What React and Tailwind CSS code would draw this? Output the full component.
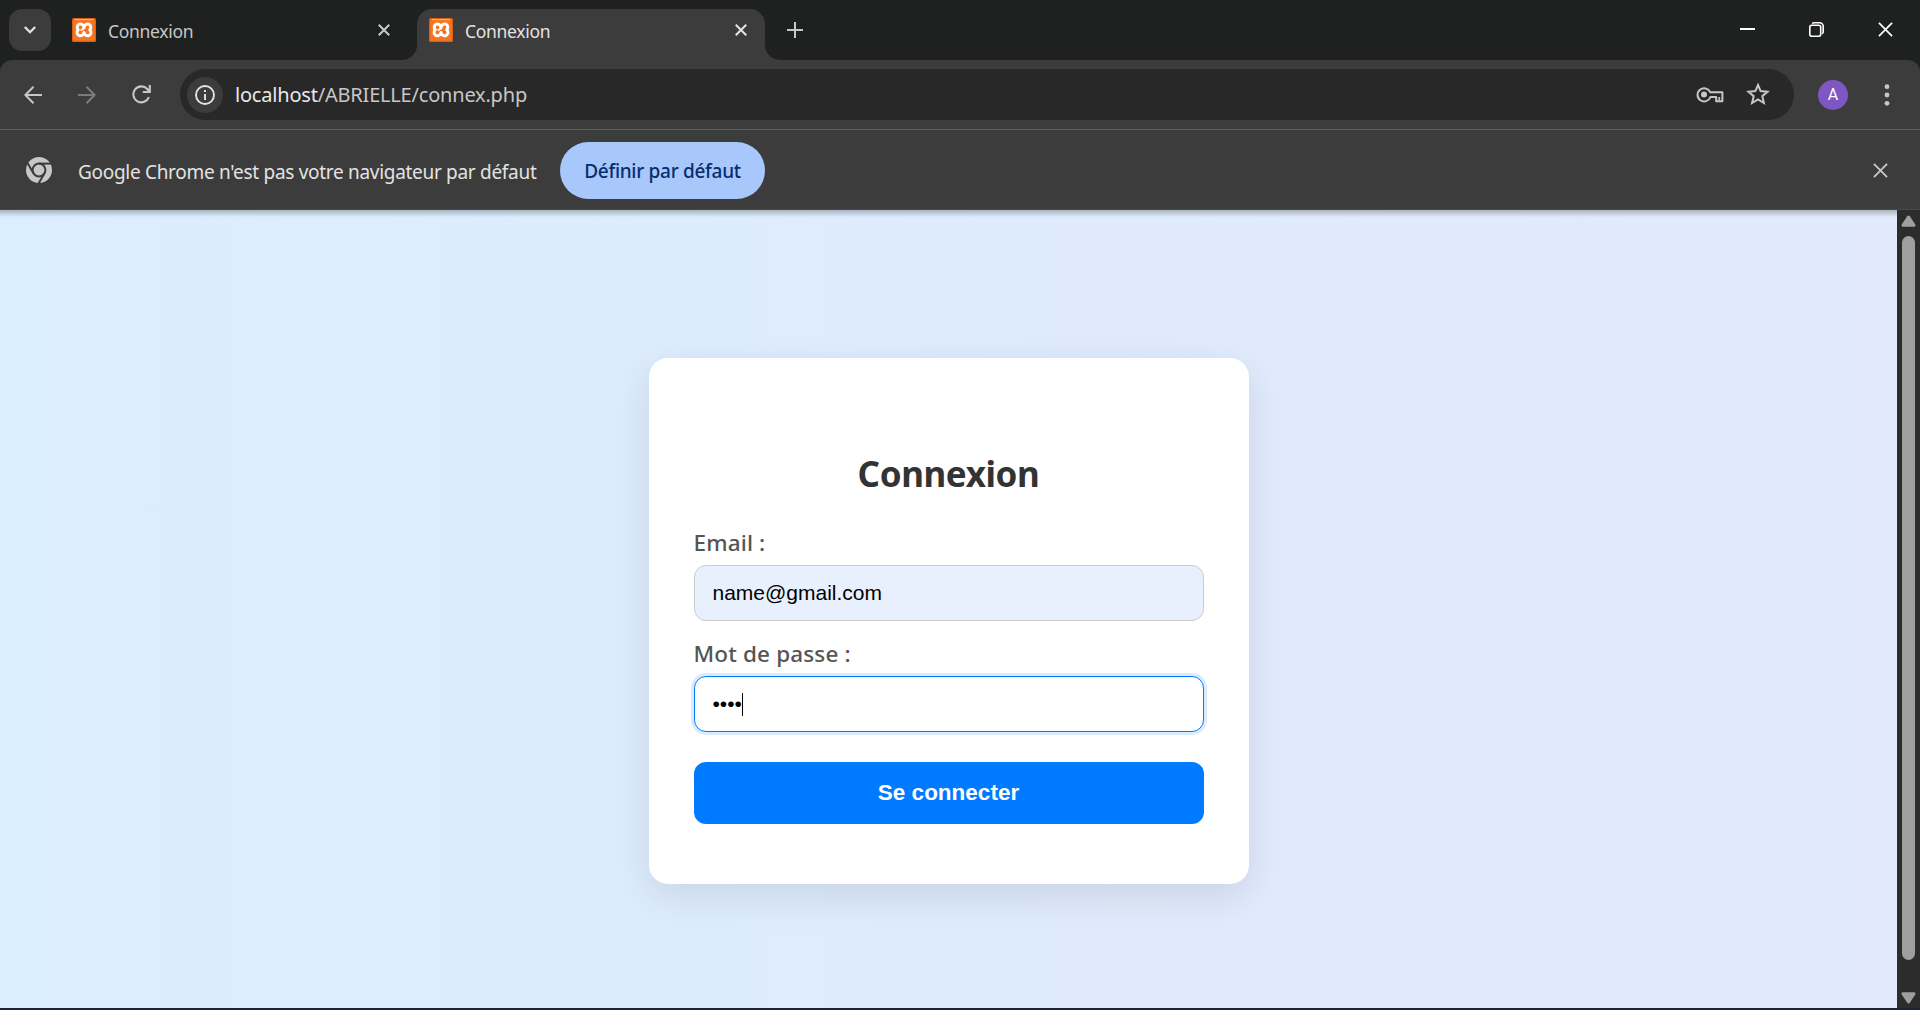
import React from "react";

const UI = "font-['Noto_Sans','Open_Sans',sans-serif]";

function Favicon() {
  return (
    <svg width="24" height="24" viewBox="0 0 24 24" fill="none" className="shrink-0">
      <rect width="24" height="24" rx="1.5" fill="#d9601a" />
      <rect x="1.2" y="1.2" width="21.6" height="21.6" rx="1" fill="#f5761f" />
      <path d="M3 1.6h18" stroke="#f9b58a" strokeWidth="1" />
      <path
        d="M12 9.6C11.6 6.6 9.2 5.4 7.2 6.2C5 7.2 4.6 9.8 6.2 11.8C4.4 14 4.8 16.6 7 17.5C9.2 18.3 11.6 17.2 12 14.4C12.4 17.2 14.8 18.3 17 17.5C19.2 16.6 19.6 14 17.8 11.8C19.4 9.8 19 7.2 16.8 6.2C14.8 5.4 12.4 6.6 12 9.6Z"
        stroke="#fff"
        strokeWidth="3"
        strokeLinejoin="round"
      />
      <path d="M12 10.4L9.4 12" stroke="#fff" strokeWidth="2" strokeLinecap="round" />
    </svg>
  );
}

function Cross({ size, width, className }) {
  return (
    <svg width={size} height={size} viewBox="0 0 16 16" fill="none" className={className}>
      <path d="M1 1l14 14M15 1L1 15" stroke="currentColor" strokeWidth={width} />
    </svg>
  );
}

function TabStrip() {
  return (
    <div className={`flex h-[60px] shrink-0 items-start bg-[#1f2120] ${UI}`}>
      <div className="mt-[9px] ml-[9px] flex size-[42px] items-center justify-center rounded-[13px] bg-[#3c3c3c]">
        <svg width="14" height="10" viewBox="0 0 14 10" fill="none">
          <path d="M1.8 2l5.2 5.2L12.2 2" stroke="#e3e3e3" strokeWidth="2.3" />
        </svg>
      </div>
      <div className="mt-[9px] ml-[21px] flex h-[42px] w-[318px] items-center text-[#c7c7c7]">
        <Favicon />
        <span className="ml-3 mt-0.5 flex-1 text-[17.5px] leading-6 tracking-[-0.3px]">Connexion</span>
        <Cross size={12} width={2.8} />
      </div>
      <svg width="27" height="15" viewBox="0 0 27 15" className="mt-[45px] shrink-0">
        <path d="M12 15H27V0A15 15 0 0 1 12 15Z" fill="#3c3c3c" />
      </svg>
      <div className="mt-[9px] flex h-[51px] w-[348px] items-start rounded-t-[15px] bg-[#3c3c3c] pt-[9px] pl-3 text-[#e3e3e3]">
        <Favicon />
        <span className="ml-3 mt-px flex-1 text-[17.5px] leading-6 tracking-[-0.3px]">Connexion</span>
        <Cross size={12} width={2.8} className="mt-1.5 mr-[18px]" />
      </div>
      <svg width="15" height="15" viewBox="0 0 15 15" className="mt-[45px]">
        <path d="M0 0V15H15A15 15 0 0 1 0 0Z" fill="#3c3c3c" />
      </svg>
      <svg width="16" height="16" viewBox="0 0 16 16" className="mt-[22px] ml-[7px]">
        <path d="M8 0v16M0 8h16" stroke="#c7c7c7" strokeWidth="2" />
      </svg>
      <div className="mt-[22px] mr-[27px] ml-auto flex items-center gap-[54px] text-white">
        <svg width="15" height="15" viewBox="0 0 15 15">
          <path d="M0 7h15" stroke="currentColor" strokeWidth="2" />
        </svg>
        <svg width="15" height="15" viewBox="0 0 15 15" fill="none" stroke="currentColor" strokeWidth="1.6">
          <rect x="0.8" y="3.3" width="10.9" height="10.9" rx="2" />
          <path d="M3.2 1.6C3.8 1 4.4.8 5.2.8H10.5A3.7 3.7 0 0 1 14.2 4.5V9.6C14.2 10.6 13.9 11.3 13.2 11.8" />
        </svg>
        <Cross size={15} width={1.8} />
      </div>
    </div>
  );
}

function Toolbar() {
  return (
    <div className="shrink-0 bg-[#1f2120]">
      <div className={`flex h-[69px] items-center rounded-t-[12px] bg-[#3c3c3c] ${UI}`}>
        <svg width="18" height="18" viewBox="0 0 18 18" fill="none" stroke="#c7c7c7" strokeWidth="2" className="mt-px ml-6">
          <path d="M18 9H1.5M9.5 .8L1.4 9l8.1 8.2" />
        </svg>
        <svg width="18" height="18" viewBox="0 0 18 18" fill="none" stroke="#7c7c7c" strokeWidth="2" className="mt-px ml-9">
          <path d="M0 9h16.5M8.5 .8L16.6 9l-8.1 8.2" />
        </svg>
        <svg width="19" height="19" viewBox="0 0 19 19" fill="none" stroke="#c7c7c7" strokeWidth="2.1" className="ml-9">
          <path d="M16.9 12A8 8 0 1 1 15.3 4L17 6.2M17.8 0V7H10.8" />
        </svg>
        <div className="ml-[29px] flex h-[51px] w-[1614px] items-center rounded-full bg-[#282828] pr-[23px] pl-[7px]">
          <div className="flex size-9 items-center justify-center rounded-full bg-[#3c3c3c]">
            <svg width="20" height="20" viewBox="0 0 20 20" fill="none" stroke="#e3e3e3">
              <circle cx="10" cy="10" r="9" strokeWidth="1.9" />
              <path d="M10 9v6M10 5v2" strokeWidth="1.9" />
            </svg>
          </div>
          <div className="ml-3 flex-1 text-[20px] leading-7 tracking-[-0.2px] text-[#c7c7c7]">
            <span className="text-[#e8e8e8]">localhost</span>/ABRIELLE/connex.php
          </div>
          <svg width="28" height="18" viewBox="0 0 28 18" fill="none" stroke="#c7c7c7" strokeWidth="2" className="mr-[22px]">
            <path d="M14.2 6.2H26.4V15.2H20.2V11H14.4A6.6 6.6 0 1 1 14.2 6.2Z" strokeLinejoin="round" />
            <path d="M23.3 11v3.4" strokeWidth="1.7" />
            <circle cx="8" cy="8.5" r="3" fill="#c7c7c7" stroke="none" />
          </svg>
          <svg width="24" height="24" viewBox="0 0 24 24" fill="none" stroke="#c7c7c7" strokeWidth="2" className="mt-[-2px] mr-px">
            <path d="M12 3l2.6 6.1 6.9.6-5.2 4.5 1.6 6.8L12 17.4 6.1 21l1.6-6.8-5.2-4.5 6.9-.6z" />
          </svg>
        </div>
        <div className="mt-px ml-6 flex size-[30px] items-center justify-center rounded-full bg-[#7e57c2] font-['Roboto',sans-serif] text-[16px] leading-none text-white">
          A
        </div>
        <svg width="6" height="22" viewBox="0 0 6 22" fill="#c7c7c7" className="mt-px ml-9">
          <circle cx="3" cy="2.7" r="2.4" />
          <circle cx="3" cy="11" r="2.4" />
          <circle cx="3" cy="19.3" r="2.4" />
        </svg>
      </div>
    </div>
  );
}

function ChromeLogo() {
  return (
    <svg width="26" height="26" viewBox="0 0 26 26" className="ml-[26px] shrink-0">
      <circle cx="13" cy="13" r="13" fill="#c7c7c7" />
      <g stroke="#3c3c3c" strokeWidth="2" fill="none">
        <circle cx="13" cy="13" r="6.4" />
        <path d="M13 6.6H25.5" />
        <path d="M7.46 16.2L1.2 5.4" />
        <path d="M18.54 16.2L12.3 27" />
      </g>
    </svg>
  );
}

function InfoBar() {
  return (
    <div className={`flex h-[81px] shrink-0 items-center border-t border-[#5e5e5e] border-b border-b-[#4a4a4a] bg-[#3c3c3c] pt-px ${UI}`}>
      <ChromeLogo />
      <span className="mt-[3px] ml-[26px] w-[482px] whitespace-nowrap text-[19px] leading-7 tracking-[-0.3px] text-[#e3e3e3]">
        Google Chrome n'est pas votre navigateur par défaut
      </span>
      <button className="h-[57px] w-[205px] rounded-full bg-[#a8c7fa] pt-0.5 text-[19px] leading-7 font-medium tracking-[-0.3px] whitespace-nowrap text-[#062e6f]">
        Définir par défaut
      </button>
      <Cross size={15} width={2} className="mr-8 ml-auto text-[#c7c7c7]" />
    </div>
  );
}

function LoginCard() {
  return (
    <form className="mt-[148px] flex h-[526px] w-[600px] flex-col rounded-[19px] bg-white px-[45px] pt-[92px] shadow-[0_12px_38px_rgba(0,0,0,0.1)]">
      <h1 className={`text-center text-[35px] leading-[48px] font-bold tracking-[-0.4px] text-[#333] ${UI}`}>Connexion</h1>
      <label className={`mt-[28px] text-[22.5px] leading-[34px] font-medium tracking-[0.15px] text-[#555] ${UI}`}>Email :</label>
      <div className="mt-[5px] flex h-14 items-center rounded-[12px] border border-[#ccc] bg-[#e8f0fe] px-[18px] font-['Liberation_Sans',sans-serif] text-[21px] text-black">
        name@gmail.com
      </div>
      <label className={`mt-[16px] text-[22.5px] leading-[34px] font-medium tracking-[0.15px] text-[#555] ${UI}`}>Mot de passe :</label>
      <div className="mt-[5px] flex h-14 items-center rounded-[12px] border border-[#007bff] bg-white px-[18px] font-['Liberation_Sans',sans-serif] text-[21px] text-black shadow-[0_0_0_3px_rgba(0,123,255,0.15)]">
        <span>••••</span>
        <span className="h-[23px] w-px bg-black" />
      </div>
      <button type="button" className="mt-[30px] h-[62px] rounded-[12px] bg-[#007bff] font-['Liberation_Sans',sans-serif] text-[22.5px] font-bold text-white">
        Se connecter
      </button>
    </form>
  );
}

function Scrollbar() {
  return (
    <div className="flex w-[23px] flex-col items-center bg-[#2c2c2c] pt-[5px]">
      <svg width="15" height="12" viewBox="0 0 15 12" fill="#9f9f9f">
        <path d="M6.2 1.2Q7.5-.3 8.8 1.2L14.3 9.6Q14.8 11.8 13 11.8H2Q.2 11.8.7 9.6Z" />
      </svg>
      <div className="mt-[9px] h-[724px] w-[13px] rounded-full bg-[#9f9f9f]" />
      <svg width="15" height="12" viewBox="0 0 15 12" fill="#9f9f9f" className="mt-8">
        <path d="M6.2 10.8Q7.5 12.3 8.8 10.8L14.3 2.4Q14.8.2 13 .2H2Q.2.2.7 2.4Z" />
      </svg>
    </div>
  );
}

export default function App() {
  return (
    <div className="flex h-[1010px] w-[1920px] flex-col overflow-hidden bg-[#1c2530]">
      <TabStrip />
      <Toolbar />
      <InfoBar />
      <div className="flex h-[798px] shrink-0">
        <div className="flex flex-1 flex-col items-center bg-linear-[90deg,#dbeefe,#e2e9fc]">
          <div className="-mb-[7px] h-[7px] w-full shrink-0 bg-linear-to-b from-black/25 to-transparent" />
          <LoginCard />
        </div>
        <Scrollbar />
      </div>
    </div>
  );
}
